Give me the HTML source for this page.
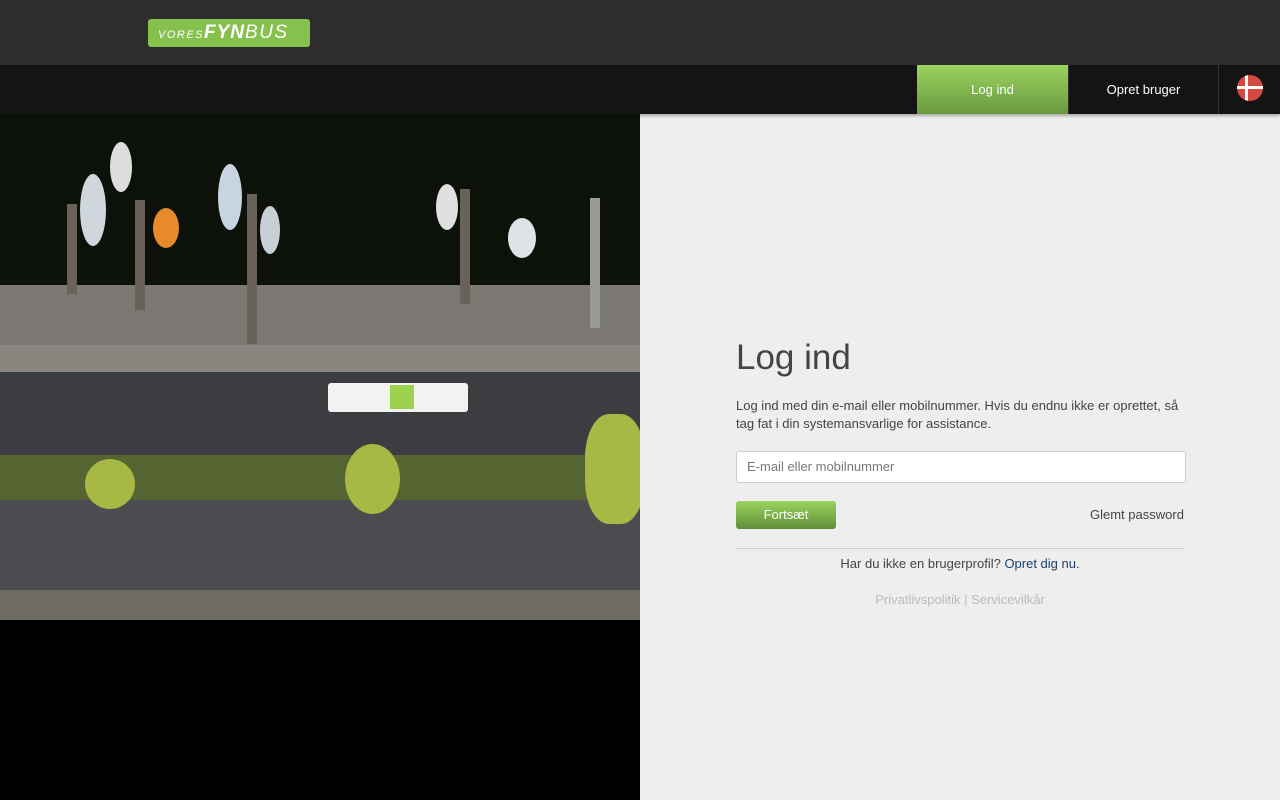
<!DOCTYPE html>
<html><head><meta charset="utf-8"><style>
*{margin:0;padding:0;box-sizing:border-box}
body{width:1280px;height:800px;overflow:hidden;background:#eee;font-family:"Liberation Sans",Arial,sans-serif;position:relative}
.top{position:absolute;left:0;top:0;width:1280px;height:65px;background:#2d2d2d}
.logo{position:absolute;left:148px;top:19px;width:162px;height:28px;background:#86c04d;border-radius:3px;color:#fff;font-style:italic;line-height:28px;padding-left:10px;white-space:nowrap}
.nav{position:absolute;left:0;top:65px;width:1280px;height:49px;background:#141414;box-shadow:0 2px 3px rgba(0,0,0,.3)}
.ni{position:absolute;top:0;height:49px;line-height:49px;text-align:center;color:#fff;font-size:13px}
.photo{position:absolute;left:0;top:114px;width:640px;height:686px;background:#000;overflow:hidden}
.b{position:absolute;left:0;width:640px}
h1{position:absolute;left:736px;top:338px;font-size:35px;font-weight:normal;color:#444}
.p{position:absolute;left:736px;top:397px;width:460px;font-size:13px;line-height:18px;color:#444}
.inp{position:absolute;left:736px;top:451px;width:450px;height:32px;background:#fff;border:1px solid #ccc;border-radius:3px;font-size:13px;color:#777;padding:0 10px;line-height:30px}
.btn{position:absolute;left:736px;top:501px;width:100px;height:28px;border-radius:3px;background:linear-gradient(#9bd35f,#5f8e37);color:#fff;font-size:13px;text-align:center;line-height:28px}
</style></head><body>
<div class="top"><div class="logo"><span style="font-size:11px;letter-spacing:1.5px">VORES</span><b style="font-size:19px;letter-spacing:1px">FYN</b><span style="font-size:19px;letter-spacing:1.5px">BUS</span></div></div>
<div class="nav">
<div class="ni" style="left:917px;width:151px;background:linear-gradient(#9bd35f,#6a9a40)">Log ind</div>
<div class="ni" style="left:1068px;width:151px;border-left:1px solid #333;border-right:1px solid #333">Opret bruger</div>
<div style="position:absolute;left:1237px;top:10px;width:26px;height:26px;border-radius:50%;background:#d24b43;overflow:hidden"><div style="position:absolute;left:8px;top:0;width:3px;height:26px;background:#fff"></div><div style="position:absolute;left:0;top:11px;width:26px;height:3px;background:#fff"></div></div>
</div>
<div class="photo">
<div class="b" style="top:0;height:171px;background:#0c110a"></div>
<div class="b" style="top:171px;height:60px;background:#7b7873"></div>
<div class="b" style="top:231px;height:27px;background:#8a857e"></div>
<div class="b" style="top:258px;height:83px;background:#3b3d41"></div>
<div style="position:absolute;left:328px;top:269px;width:140px;height:29px;background:#f2f2f0;border-radius:3px"><div style="position:absolute;left:62px;top:2px;width:24px;height:24px;background:#9dd24e"></div></div>
<div class="b" style="top:341px;height:45px;background:#556430"></div>
<div class="b" style="top:386px;height:90px;background:#4a4c50"></div>
<div class="b" style="top:476px;height:30px;background:#6f6c66"></div>
<div style="position:absolute;left:85px;top:345px;width:50px;height:50px;border-radius:50%;background:#a8b844"></div>
<div style="position:absolute;left:345px;top:330px;width:55px;height:70px;border-radius:50%;background:#a8b844"></div>
<div style="position:absolute;left:585px;top:300px;width:60px;height:110px;border-radius:40%;background:#a8b844"></div>
<div style="position:absolute;left:67px;top:90px;width:10px;height:90px;background:#6a6258"></div>
<div style="position:absolute;left:135px;top:86px;width:10px;height:110px;background:#6a6258"></div>
<div style="position:absolute;left:247px;top:80px;width:10px;height:150px;background:#6a6258"></div>
<div style="position:absolute;left:460px;top:75px;width:10px;height:115px;background:#6a6258"></div>
<div style="position:absolute;left:590px;top:84px;width:10px;height:130px;background:#9a9a98"></div>
<div style="position:absolute;left:110px;top:28px;width:22px;height:50px;border-radius:50%;background:#ddd"></div>
<div style="position:absolute;left:80px;top:60px;width:26px;height:72px;border-radius:50%;background:#cfd6dc"></div>
<div style="position:absolute;left:153px;top:94px;width:26px;height:40px;border-radius:50%;background:#e68a2a"></div>
<div style="position:absolute;left:218px;top:50px;width:24px;height:66px;border-radius:50%;background:#c8d4e0"></div>
<div style="position:absolute;left:260px;top:92px;width:20px;height:48px;border-radius:50%;background:#c8cfd6"></div>
<div style="position:absolute;left:436px;top:70px;width:22px;height:46px;border-radius:50%;background:#e0e0e0"></div>
<div style="position:absolute;left:508px;top:104px;width:28px;height:40px;border-radius:50%;background:#dfe2e6"></div>
</div>
<h1>Log ind</h1>
<div class="p">Log ind med din e-mail eller mobilnummer. Hvis du endnu ikke er oprettet, så tag fat i din systemansvarlige for assistance.</div>
<div class="inp">E-mail eller mobilnummer</div>
<div class="btn">Fortsæt</div>
<div style="position:absolute;left:1090px;top:507px;font-size:13px;color:#444">Glemt password</div>
<div style="position:absolute;left:736px;top:548px;width:448px;height:1px;background:#ccc"></div>
<div style="position:absolute;left:736px;top:556px;width:448px;text-align:center;font-size:13px;color:#444">Har du ikke en brugerprofil? <span style="color:#1d3f6e">Opret dig nu.</span></div>
<div style="position:absolute;left:736px;top:592px;width:448px;text-align:center;font-size:13px;color:#bbb">Privatlivspolitik | Servicevilkår</div>
</body></html>
